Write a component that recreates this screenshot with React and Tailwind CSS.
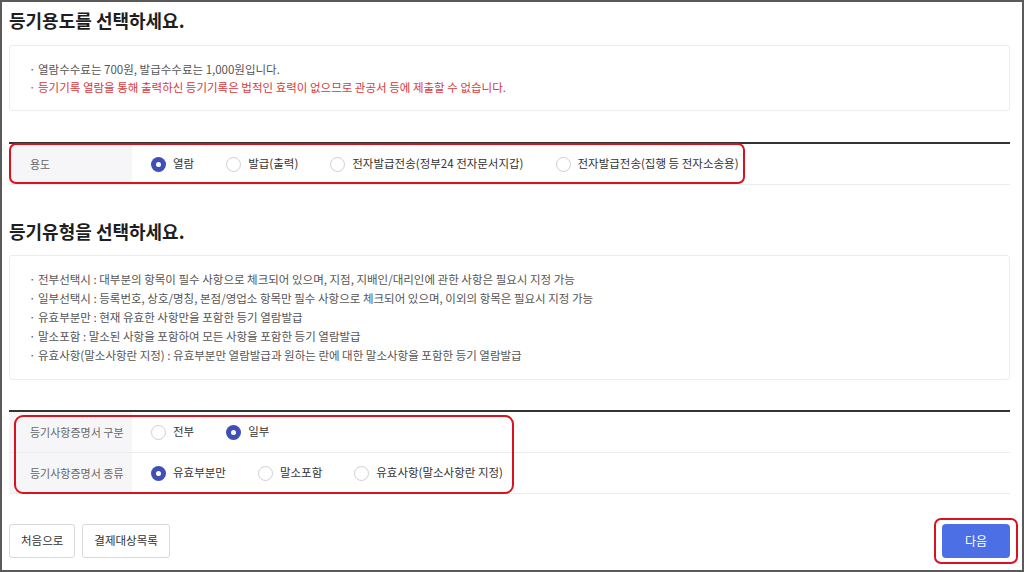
import React from 'react';

const font = { fontFamily: '"Noto Sans CJK KR", "Noto Sans", sans-serif' };

const purposes = ['열람', '발급(출력)', '전자발급전송(정부24 전자문서지갑)', '전자발급전송(집행 등 전자소송용)'];

const typeNotes = [
    '전부선택시 : 대부분의 항목이 필수 사항으로 체크되어 있으며, 지점, 지배인/대리인에 관한 사항은 필요시 지정 가능',
    '일부선택시 : 등록번호, 상호/명칭, 본점/영업소 항목만 필수 사항으로 체크되어 있으며, 이외의 항목은 필요시 지정 가능',
    '유효부분만 : 현재 유효한 사항만을 포함한 등기 열람발급',
    '말소포함 : 말소된 사항을 포함하여 모든 사항을 포함한 등기 열람발급',
    '유효사항(말소사항란 지정) : 유효부분만 열람발급과 원하는 란에 대한 말소사항을 포함한 등기 열람발급',
];

// Radio circle + label
const Radio = ({ label, checked }) => (
    <label className="flex items-center">
        {checked ? (
            <span className="w-[15px] h-[15px] rounded-full bg-[#3f4fb6] flex items-center justify-center">
                <span className="w-[5px] h-[5px] rounded-full bg-white" />
            </span>
        ) : (
            <span className="w-[15px] h-[15px] rounded-full border border-[#cfcfcf] bg-white" />
        )}
        <span className="ml-[7px] text-[11.5px] text-[#333]">{label}</span>
    </label>
);

const Row = ({ title, options, selected }) => (
    <div className="flex h-[41px] border-b border-[#ececec]">
        <div className="w-[123px] bg-[#f6f6f8] flex items-center pl-[21px] text-[11px] text-[#666]">{title}</div>
        <div className="flex items-center gap-[32px] pl-[19px]">
            {options.map((o) => (
                <Radio key={o} label={o} checked={o === selected} />
            ))}
        </div>
    </div>
);

const App = () => {
    return (
        <div className="w-[1024px] h-[572px] bg-white border-2 border-[#5a5a5a] overflow-hidden" style={font}>
            <div className="ml-[7px] w-[1001px]">
                <h2 className="pt-[4px] text-[18px] leading-[28px] font-bold text-[#1e1e1e]">등기용도를 선택하세요.</h2>

                <div className="mt-[11px] border border-[#ececec] rounded-[3px] py-[14px] pl-[19px] text-[11.5px] leading-[18px]">
                    <p className="text-[#555]">· 열람수수료는 700원, 발급수수료는 1,000원입니다.</p>
                    <p className="text-[#d8393b]">· 등기기록 열람을 통해 출력하신 등기기록은 법적인 효력이 없으므로 관공서 등에 제출할 수 없습니다.</p>
                </div>

                <div className="relative mt-[31px] border-t-2 border-[#333]">
                    <Row title="용도" options={purposes} selected="열람" />
                    <div className="absolute left-0 top-[-1px] w-[736px] h-[41px] border-2 border-[#d9121f] rounded-[7px]" />
                </div>

                <h2 className="mt-[32px] text-[18px] leading-[28px] font-bold text-[#1e1e1e]">등기유형을 선택하세요.</h2>

                <div className="mt-[10px] border border-[#ececec] rounded-[3px] py-[14px] pl-[19px] text-[11.5px] leading-[19px] text-[#555]">
                    {typeNotes.map((n) => (
                        <p key={n}>· {n}</p>
                    ))}
                </div>

                <div className="relative mt-[30px] border-t-2 border-[#333]">
                    <Row title="등기사항증명서 구분" options={['전부', '일부']} selected="일부" />
                    <Row title="등기사항증명서 종류" options={['유효부분만', '말소포함', '유효사항(말소사항란 지정)']} selected="유효부분만" />
                    <div className="absolute left-[5px] top-[3px] w-[500px] h-[79px] border-2 border-[#d9121f] rounded-[9px]" />
                </div>

                <div className="mt-[30px] flex items-center justify-between">
                    <div className="flex gap-[7px]">
                        <button className="h-[34px] px-[11px] border border-[#d9d9d9] rounded-[3px] text-[11.5px] text-[#333] bg-white">처음으로</button>
                        <button className="h-[34px] px-[11px] border border-[#d9d9d9] rounded-[3px] text-[11.5px] text-[#333] bg-white">결제대상목록</button>
                    </div>
                    <div className="relative">
                        <button className="h-[34px] w-[68px] rounded-[4px] bg-[#4d6fe6] text-white text-[12px]">다음</button>
                        <div className="absolute left-[-8px] top-[-6px] w-[84px] h-[46px] border-2 border-[#d9121f] rounded-[7px]" />
                    </div>
                </div>
            </div>
        </div>
    );
};

export default App;
